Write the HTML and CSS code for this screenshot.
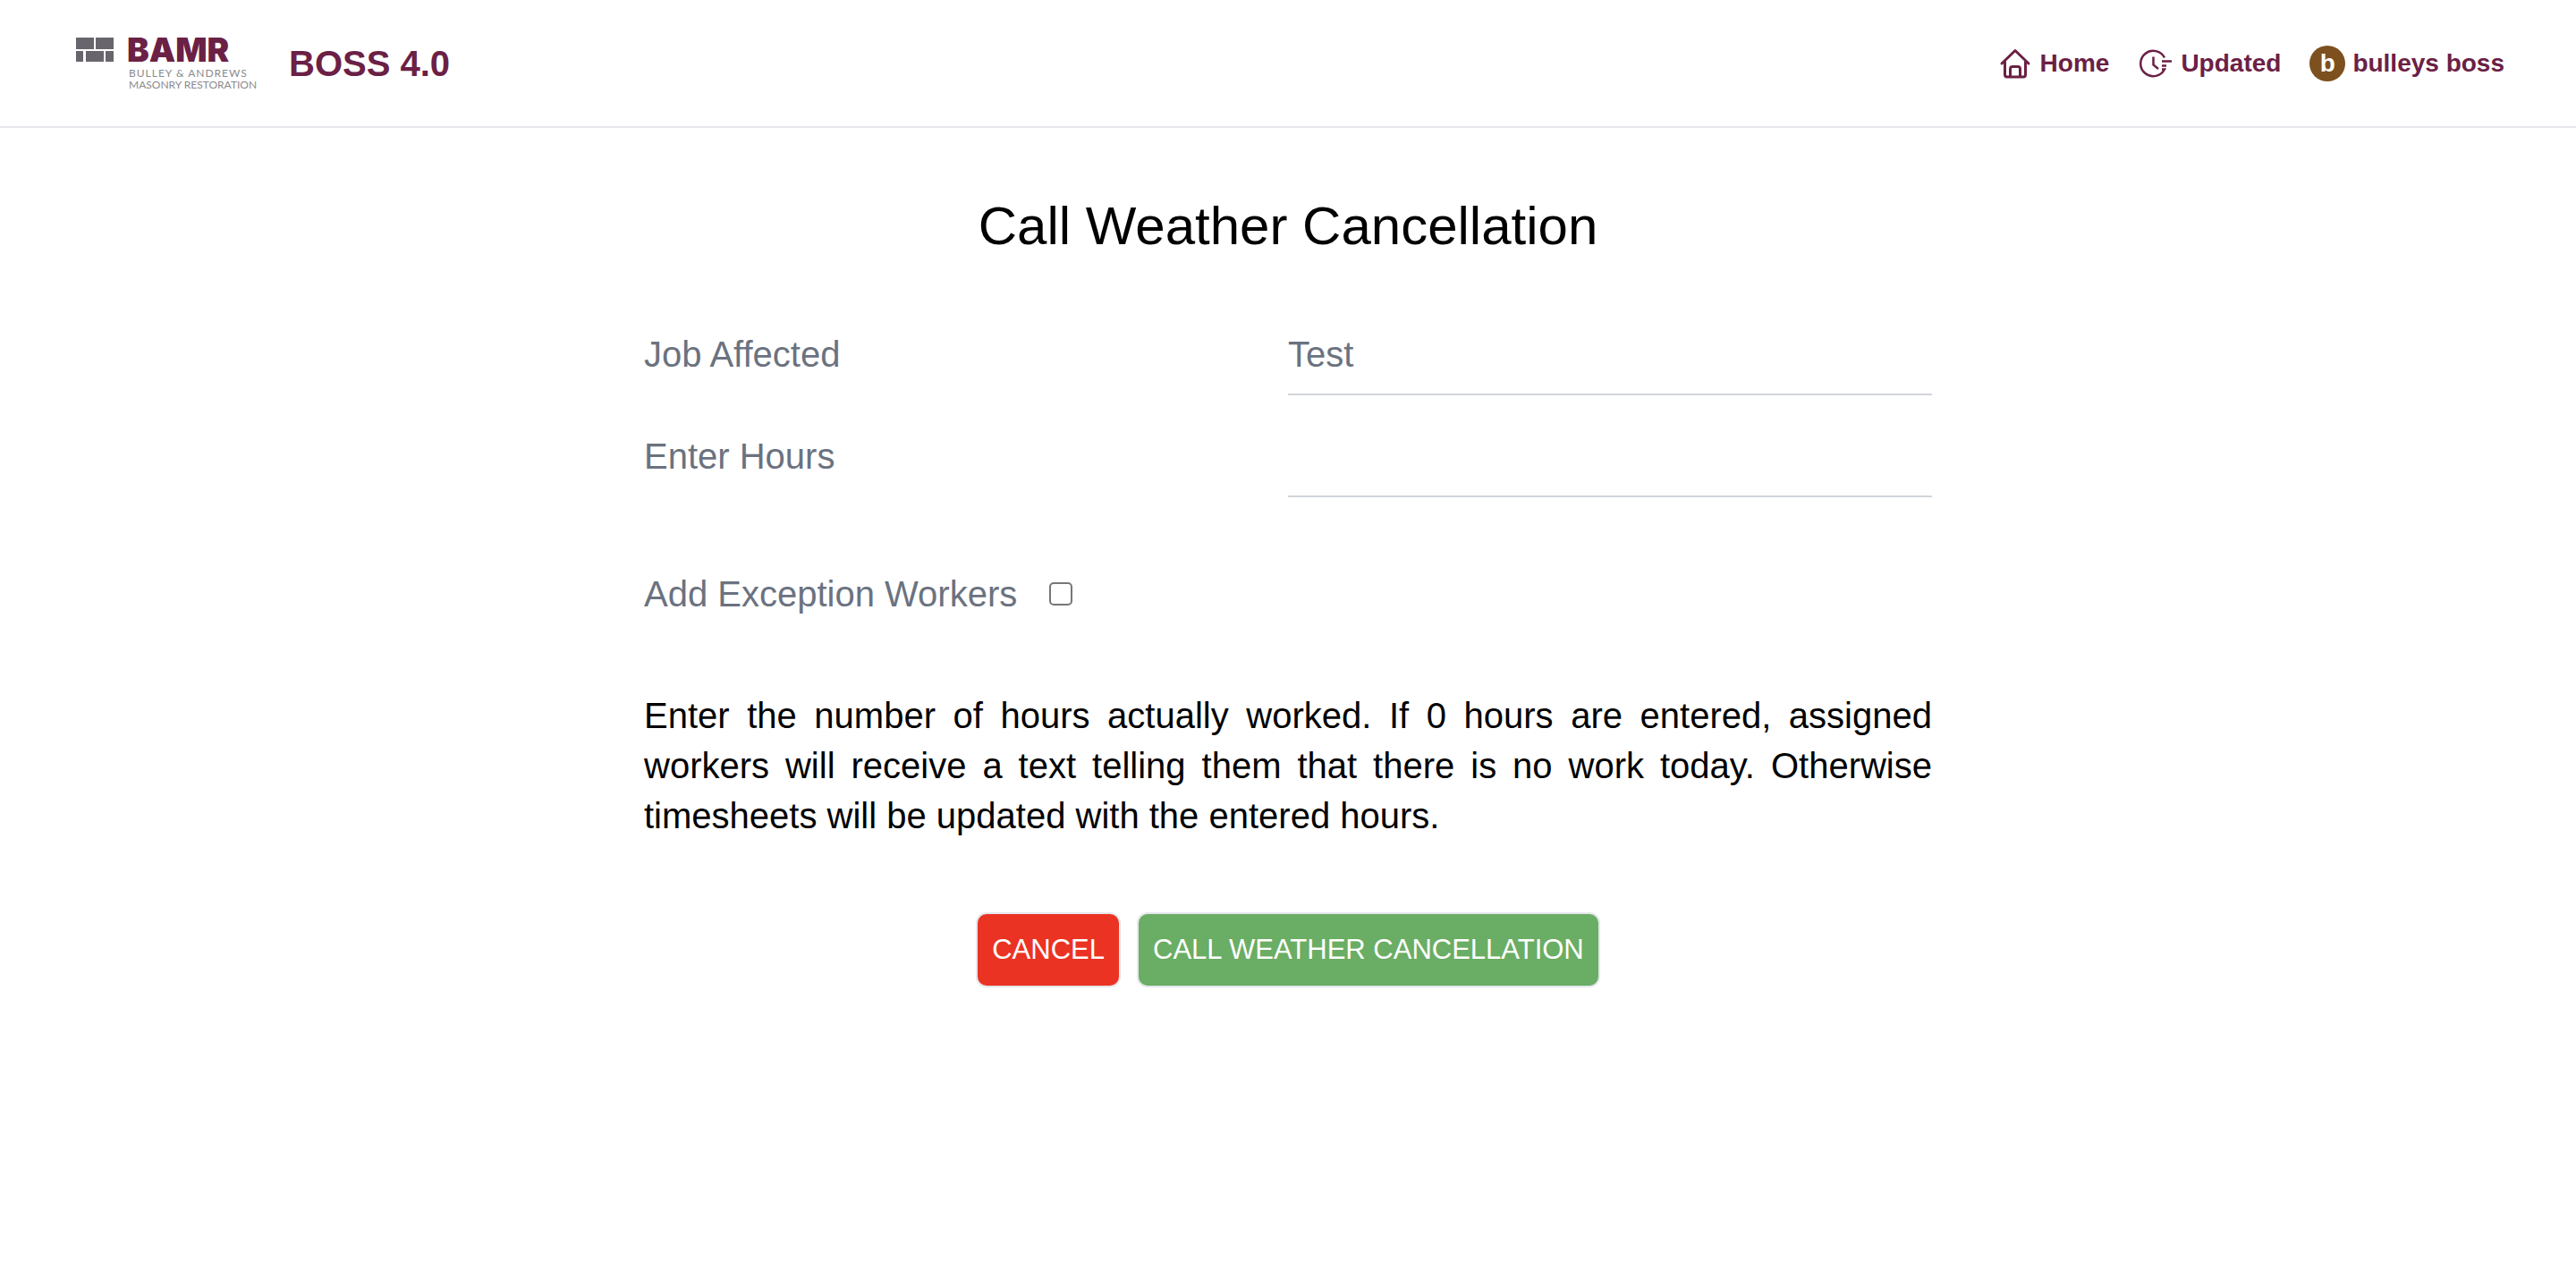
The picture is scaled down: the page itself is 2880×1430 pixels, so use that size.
FILE: index.html
```html
<!DOCTYPE html>
<html lang="en">
<head>
<meta charset="utf-8">
<title>BOSS 4.0 - Call Weather Cancellation</title>
<link rel="stylesheet" href="styles.css">
</head>
<body>
<header class="topbar">
  <a class="brand" href="#">
    <svg class="logo" width="207" height="66" viewBox="0 0 207 66" role="img" aria-label="BAMR Bulley &amp; Andrews Masonry Restoration">
      <g fill="#68666c">
        <path d="M1 4h20v13H1zM23 4h20v13H23zM1 19h8v12H1zM12 19h20v12H12zM34 19h9v12h-9z"/>
      </g>
      <text class="logo-name" x="58" y="31">BAMR</text>
      <text class="logo-sub logo-wide" x="60" y="48">BULLEY &amp; ANDREWS</text>
      <text class="logo-sub" x="60" y="61">MASONRY RESTORATION</text>
    </svg>
    <span class="product">BOSS 4.0</span>
  </a>
  <nav class="nav">
    <a class="nav-item" href="#">
      <svg width="40" height="40" viewBox="0 0 40 40" fill="none" stroke="currentColor" stroke-width="3" stroke-linecap="round" stroke-linejoin="round">
        <path d="M5 20 20 5.500 35 20M8.500 18v14.500q0 2.500 2.500 2.500h18q2.500 0 2.500-2.500V18M14.500 35V26q0-2.500 2.500-2.500h6q2.500 0 2.500 2.500v9"/>
      </svg>
      Home
    </a>
    <a class="nav-item" href="#">
      <svg width="40" height="40" viewBox="0 0 40 40" fill="none" stroke="currentColor" stroke-width="2.500">
        <path d="M30 13.500A14.200 14.200 0 1 0 30 26.500H27M17.500 12.500v9l5.500 4.500M27 17.500h11M27 22.500h5"/>
      </svg>
      Updated
    </a>
    <a class="nav-item" href="#"><span class="avatar">b</span>bulleys boss</a>
  </nav>
</header>
<main class="page">
  <h1 class="title">Call Weather Cancellation</h1>
  <form class="form">
    <div class="field">
      <label class="field-label" for="job">Job Affected</label>
      <input class="text-input" id="job" type="text" value="Test">
    </div>
    <div class="field">
      <label class="field-label" for="hours">Enter Hours</label>
      <input class="text-input" id="hours" type="text">
    </div>
    <div class="check">
      <label for="exceptions">Add Exception Workers</label>
      <input class="checkbox" id="exceptions" type="checkbox">
    </div>
    <p class="note">Enter the number of hours actually worked. If 0 hours are entered, assigned workers will receive a text telling them that there is no work today. Otherwise timesheets will be updated with the entered hours.</p>
    <div class="actions">
      <button class="btn btn-cancel" type="button">CANCEL</button>
      <button class="btn btn-confirm" type="submit">CALL WEATHER CANCELLATION</button>
    </div>
  </form>
</main>
</body>
</html>
```
FILE: styles.css
```css
* {
  box-sizing: border-box;
}

body {
  margin: 0;
  background: #fff;
  color: #000;
  font-family: "Liberation Sans", Arial, Helvetica, sans-serif;
  font-size: 40px;
  line-height: 56px;
}

.topbar {
  display: flex;
  justify-content: space-between;
  align-items: center;
  padding: 38px 80px 37px 84px;
  border-bottom: 2px solid #e5e7eb;
}

.brand,
.nav-item {
  display: flex;
  align-items: center;
  color: #6b2045;
  font-weight: 700;
  text-decoration: none;
}

.brand {
  gap: 32px;
}

.logo {
  overflow: visible;
}

.logo-name {
  font-family: Inter, "Liberation Sans", sans-serif;
  font-size: 37px;
  font-weight: 900;
  fill: #6b2045;
}

.logo-sub {
  font-family: Lato, "Liberation Sans", sans-serif;
  font-size: 12px;
  font-weight: 400;
  fill: #8b8a8f;
}

.logo-wide {
  letter-spacing: 1px;
}

.nav {
  display: flex;
  gap: 32px;
}

.nav-item {
  gap: 8px;
  font-size: 28px;
  line-height: 40px;
}

.avatar {
  width: 40px;
  height: 40px;
  border-radius: 50%;
  background: #7c501f;
  color: #fff;
  text-align: center;
}

.page {
  width: 50%;
  margin: 0 auto;
  padding: 74px 0;
}

.title {
  margin: 0 0 63px;
  font-size: 60px;
  line-height: 72px;
  font-weight: 400;
  text-align: center;
}

.form {
  display: flex;
  flex-direction: column;
  gap: 24px;
}

.field {
  display: grid;
  grid-template-columns: 1fr 1fr;
  align-items: center;
  color: #6b7280;
}

.field-label {
  padding-bottom: 2px;
}

.text-input {
  width: 100%;
  height: 90px;
  padding: 16px 0;
  border: 0;
  border-bottom: 2px solid #d1d5db;
  border-radius: 0;
  background: transparent;
  color: #6b7280;
  font: inherit;
}

.check {
  display: flex;
  align-items: center;
  gap: 36px;
  margin-top: 56px;
  color: #6b7280;
}

.checkbox {
  appearance: none;
  width: 26px;
  height: 26px;
  margin: 0;
  border: 2px solid #767676;
  border-radius: 5px;
  background: #fff;
}

.note {
  margin: 56px 0;
  text-align: justify;
}

.actions {
  display: flex;
  justify-content: center;
  gap: 18px;
}

.btn {
  padding: 16px;
  border: 2px solid #e5e7eb;
  border-radius: 12px;
  color: #fff;
  font: inherit;
  font-size: 31px;
  line-height: 48px;
}

.btn-cancel {
  background: #eb3323;
}

.btn-confirm {
  background: #6aad64;
}
```
